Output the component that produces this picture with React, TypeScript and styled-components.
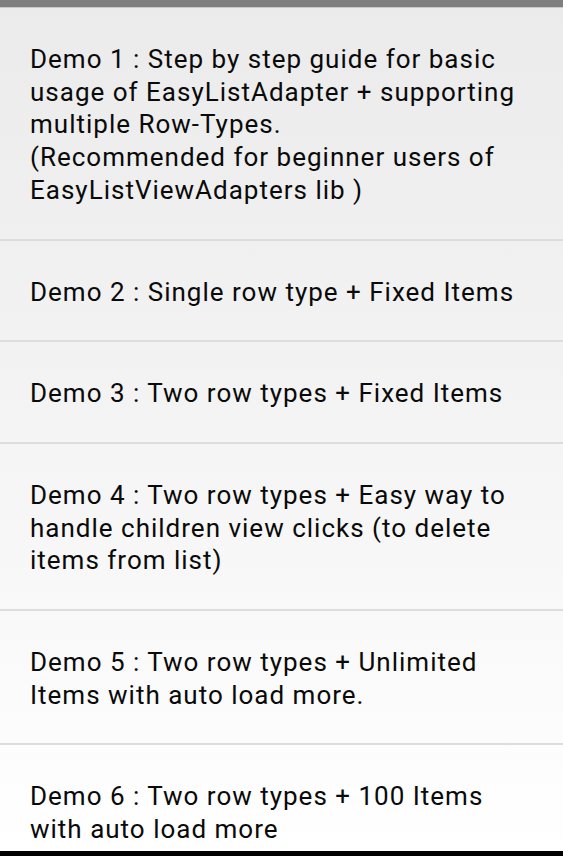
import React from "react";
import styled, { createGlobalStyle } from "styled-components";

const GlobalStyle = createGlobalStyle`
  html, body {
    margin: 0;
    padding: 0;
    background: #ffffff;
    overflow: hidden;
  }
  * { box-sizing: border-box; }
`;

const Screen = styled.div`
  width: 563px;
  height: 856px;
  display: flex;
  flex-direction: column;
  overflow: hidden;
  font-family: Roboto, "Noto Sans", sans-serif;
`;

const TopBar = styled.div`
  flex: 0 0 auto;
  height: 8px;
  background: #7f7f7f;
  border-bottom: 1px solid #c9c9c9;
`;

const List = styled.ul`
  flex: 1 1 auto;
  margin: 0;
  padding: 0;
  list-style: none;
  overflow: hidden;
  background: linear-gradient(to bottom, #ebebeb 0%, #f4f4f4 50%, #ffffff 100%);
`;

const Row = styled.li<{ $last?: boolean }>`
  padding: 35px 28px 32px 30px;
  border-bottom: ${(p) => (p.$last ? "none" : "2px solid #dddddd")};
  font-size: 26px;
  line-height: 32.7px;
  letter-spacing: 1px;
  color: #0a0a0a;
  white-space: pre-line;
`;

const NavBar = styled.div`
  flex: 0 0 auto;
  height: 5px;
  background: #000000;
`;

const items = [
  "Demo 1 : Step by step guide for basic usage of EasyListAdapter + supporting multiple Row-Types.\n(Recommended for beginner users of EasyListViewAdapters lib )",
  "Demo 2 : Single row type + Fixed Items",
  "Demo 3 : Two row types + Fixed Items",
  "Demo 4 : Two row types + Easy way to handle children view clicks (to delete items from list)",
  "Demo 5 : Two row types + Unlimited Items with auto load more.",
  "Demo 6 : Two row types + 100 Items with auto load more",
];

export default function App() {
  return (
    <Screen>
      <GlobalStyle />
      <TopBar />
      <List>
        {items.map((t, i) => (
          <Row key={i} $last={i === items.length - 1}>
            {t}
          </Row>
        ))}
      </List>
      <NavBar />
    </Screen>
  );
}
